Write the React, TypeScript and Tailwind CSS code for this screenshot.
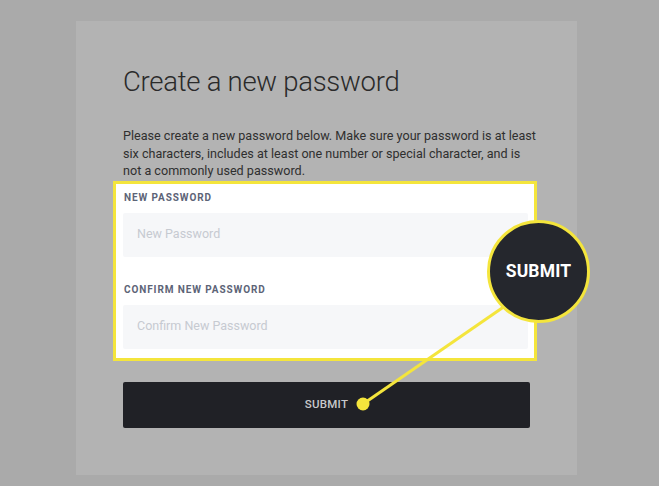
import React from "react"

function Field({ label, placeholder }: { label: string; placeholder: string }) {
	return (
		<div>
			<label className="block pl-[1px] text-[10px] leading-[14px] font-bold tracking-[0.09em] text-[#5d6477]">
				{label}
			</label>
			<div className="mt-[8px] h-[44px] bg-[#f6f7f9] rounded-[2px] flex items-center pl-[14px]">
				<input
					type="password"
					placeholder={placeholder}
					className="w-full bg-transparent outline-none text-[12.5px] placeholder:text-[#c6cad1]"
				/>
			</div>
		</div>
	)
}

export default function App() {
	return (
		<div className="relative w-full h-[486px] bg-[#aaaaaa] overflow-hidden" style={{ fontFamily: "Roboto, 'Liberation Sans', sans-serif" }}>
			<div className="ml-[76px] mt-[21px] w-[501px] h-[454px] bg-[#b3b3b3] pt-[44px] pl-[47px]">
				<h1 className="text-[27.5px] leading-[34px] font-light tracking-[-0.01em] text-[#2a2a2a]">
					Create a new password
				</h1>
				<p className="mt-[28px] w-[418px] text-[12.6px] leading-[17.5px] text-[#2f2f2f]">
					Please create a new password below. Make sure your password is at least six characters, includes at least one number or special character, and is not a commonly used password.
				</p>
				<div className="mt-[1px] -ml-[10px] w-[424px] border-[3px] border-[#f4e53c] bg-white pt-[7px] pb-[9px] pl-[7px] pr-[6px]">
					<Field label="NEW PASSWORD" placeholder="New Password" />
					<div className="h-[26px]" />
					<Field label="CONFIRM NEW PASSWORD" placeholder="Confirm New Password" />
				</div>
				<button className="mt-[21px] w-[407px] h-[46px] bg-[#202126] rounded-[2px] text-[11.5px] font-medium tracking-[0.02em] text-[#c9c9cb]">
					SUBMIT
				</button>
			</div>

			{/* callout */}
			<svg className="absolute inset-0 pointer-events-none" width="659" height="486">
				<line x1="505" y1="306" x2="363" y2="404" stroke="#f4e53c" strokeWidth="3" />
				<circle cx="363" cy="404" r="6.5" fill="#f4e53c" />
			</svg>
			<div className="absolute left-[487px] top-[220px] w-[103px] h-[103px] rounded-full border-[3px] border-[#f4e53c] bg-[#25272d] flex items-center justify-center">
				<span className="text-[17.5px] font-bold text-white tracking-[0.01em]">SUBMIT</span>
			</div>
		</div>
	)
}
